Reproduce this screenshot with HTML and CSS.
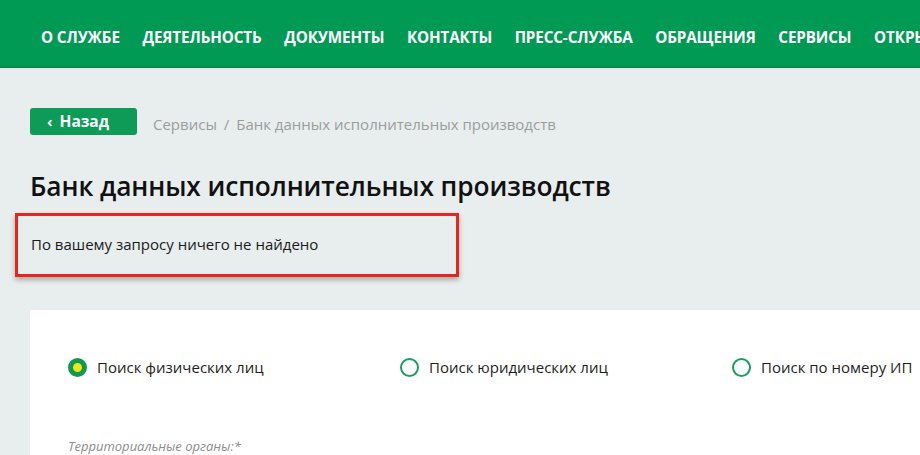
FILE: index.html
```html
<!DOCTYPE html>
<html lang="ru">
<head>
<meta charset="utf-8">
<link rel="stylesheet" href="styles.css">
</head>
<body>
<nav class="topnav">
  <ul class="menu">
    <li>О службе</li>
    <li>Деятельность</li>
    <li>Документы</li>
    <li>Контакты</li>
    <li>Пресс-служба</li>
    <li>Обращения</li>
    <li>Сервисы</li>
    <li>Открытая служба</li>
  </ul>
</nav>
<main class="content">
  <div class="crumbs-row">
    <a class="back-btn"><span class="chev">‹</span>Назад</a>
    <div class="crumbs">Сервисы <span class="sep">/</span> Банк данных исполнительных производств</div>
  </div>
  <h1 class="title">Банк данных исполнительных производств</h1>
  <div class="notice">По вашему запросу ничего не найдено</div>
  <section class="card">
    <div class="radios">
      <label class="radio"><span class="dot checked"></span>Поиск физических лиц</label>
      <label class="radio"><span class="dot"></span>Поиск юридических лиц</label>
      <label class="radio"><span class="dot"></span>Поиск по номеру ИП</label>
    </div>
    <div class="field-label">Территориальные органы:*</div>
  </section>
</main>
</body>
</html>
```

FILE: styles.css
```css
* { box-sizing: border-box; }
html, body { margin: 0; padding: 0; }
body {
  background: #e8eeed;
  font-family: "Open Sans", "Noto Sans", sans-serif;
  color: #1e1e1e;
  overflow: hidden;
  width: 920px;
  height: 455px;
}
.topnav {
  height: 68px;
  background: #009a55;
  border-bottom: 2px solid #0a8a4c;
  overflow: hidden;
}
.menu {
  list-style: none;
  margin: 0;
  padding: 0 0 0 41px;
  display: flex;
  gap: 22.6px;
  white-space: nowrap;
  height: 66px;
  align-items: center;
}
.menu li {
  flex: none;
  color: #fff;
  font-weight: 700;
  font-size: 15.2px;
  text-transform: uppercase;
  letter-spacing: -0.1px;
  padding-top: 8px;
}
.content {
  padding-left: 30px;
}
.crumbs-row {
  display: flex;
  align-items: center;
  margin-top: 40px;
  height: 27px;
}
.back-btn {
  display: flex;
  align-items: center;
  width: 107px;
  height: 27px;
  background: #0e9a57;
  border-radius: 3px;
  color: #fff;
  font-weight: 700;
  font-size: 15.5px;
  padding-left: 17px;
  padding-bottom: 2px;
}
.chev {
  font-size: 15px;
  margin-right: 7px;
  font-weight: 700;
}
.crumbs {
  margin-left: 16px;
  font-size: 15px;
  color: #9a9d9e;
  padding-top: 4px;
}
.sep { margin: 0 3px; }
.title {
  margin: 33px 0 0 0;
  font-size: 26.3px;
  font-weight: 600;
  line-height: 36px;
  color: #111;
  letter-spacing: -0.1px;
}
.notice {
  margin: 9px 0 0 -15px;
  width: 444px;
  height: 64px;
  border: 3px solid #e8241c;
  box-shadow: 0 3px 5px rgba(0, 0, 0, 0.28);
  font-size: 15px;
  color: #1a1a1a;
  padding: 18px 0 0 13px;
}
.card {
  margin-top: 33px;
  background: #fff;
  height: 160px;
  padding: 46px 0 0 38px;
  overflow: hidden;
}
.radios {
  display: flex;
}
.radio {
  flex: none;
  display: flex;
  align-items: center;
  width: 332px;
  font-size: 15px;
  color: #1e1e1e;
  line-height: 22px;
  white-space: nowrap;
}
.radio:last-child { width: auto; }
.dot {
  width: 19px;
  height: 19px;
  border-radius: 50%;
  border: 2px solid #16a065;
  margin-right: 10px;
  flex: none;
}
.dot.checked {
  border: 5px solid #10994f;
  background: #f2e516;
}
.field-label {
  margin-top: 59px;
  font-size: 13px;
  font-style: italic;
  color: #8a8c8d;
}
```
